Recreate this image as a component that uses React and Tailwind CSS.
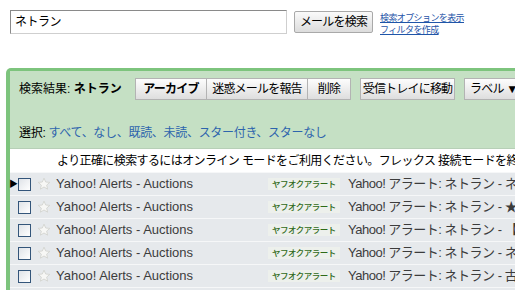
import React from "react";

const jp = "font-['Liberation_Sans','Noto_Sans_CJK_JP',sans-serif]";

const rows = [
  { arrow: true, tail: "ネト" },
  { arrow: false, tail: "★☆" },
  { arrow: false, tail: "【新" },
  { arrow: false, tail: "ネト" },
  { arrow: false, tail: "古本" },
  { arrow: false, tail: "ネト" },
];

const Star = () => (
  <svg width="14" height="14" viewBox="0 0 24 24">
    <path
      d="M12 2l2.9 6.6 7.1.6-5.4 4.7 1.6 7-6.2-3.8-6.2 3.8 1.6-7L2 9.2l7.1-.6z"
      fill="#f7f7f5"
      stroke="#d2d4cf"
      strokeWidth="1.5"
      strokeLinejoin="round"
    />
  </svg>
);

const ToolButton = ({ children, className = "" }) => (
  <div
    className={`h-[22px] flex items-center border border-[#b3b3b3] bg-gradient-to-b from-[#fdfdfd] to-[#dedede] text-[12px] tracking-[-0.8px] text-black ${className}`}
  >
    {children}
  </div>
);

const MailRow = ({ arrow, tail }) => (
  <div className="h-[23px] flex items-center bg-[#e6e9ec] border-t border-[#f6f7f8] whitespace-nowrap">
    <div className="w-[8px] flex justify-end">
      {arrow && <span className="text-[9px] leading-none text-black">▶</span>}
    </div>
    <div className="w-[13px] h-[13px] border border-[#33557a] bg-gradient-to-br from-[#dfe3e8] to-white" />
    <div className="ml-[6px] w-[14px] flex items-center">
      <Star />
    </div>
    <div className="ml-[5px] w-[212px] text-[13px] text-[#3c3c3c]">
      Yahoo! Alerts - Auctions
    </div>
    <div className="w-[80px] flex">
      <span className="px-[4px] bg-[#edf0ec] text-[8.5px] font-medium tracking-[-0.5px] text-[#2f6a18] leading-[12px]">
        ヤフオクアラート
      </span>
    </div>
    <div className="text-[13px] text-[#3c3c3c] tracking-[-0.5px]">
      Yahoo! アラート: ネトラン - {tail}
    </div>
  </div>
);

export default function App() {
  return (
    <div className={`w-[515px] h-[290px] overflow-hidden bg-white ${jp}`}>
      {/* search bar */}
      <div className="h-[68px] flex items-start pl-[10px] pt-[10px]">
        <div className="w-[277px] h-[24px] border border-[#8a8a8a] border-b-[#cfcfcf] border-r-[#cfcfcf] flex items-center pl-[4px] text-[12px] tracking-[-0.5px] text-black">
          ネトラン
        </div>
        <div className="ml-[7px] mt-[1px] w-[79px] h-[22px] border border-[#a9a9a9] rounded-[2px] bg-gradient-to-b from-[#fafafa] to-[#dcdcdc] flex items-center justify-center text-[12px] tracking-[-0.8px] text-black">
          メールを検索
        </div>
        <div className="ml-[7px] mt-[2px] flex flex-col text-[9px] leading-[12px] tracking-[-0.6px] text-[#1f55a8] underline">
          <span>検索オプションを表示</span>
          <span>フィルタを作成</span>
        </div>
      </div>

      {/* results panel */}
      <div className="ml-[6px] w-[620px] border-l-4 border-t-[3px] border-[#7dc47d] rounded-tl-[5px]">
        <div className="bg-[#c5e0c4] pl-[9px] pt-[7px] pb-[8px]">
          <div className="flex items-center whitespace-nowrap">
            <div className="w-[116px] text-[12px] text-black">
              検索結果: <span className="font-bold">ネトラン</span>
            </div>
            <ToolButton className="w-[72px] justify-center font-bold">アーカイブ</ToolButton>
            <ToolButton className="w-[101px] justify-center border-l-0">迷惑メールを報告</ToolButton>
            <ToolButton className="w-[43px] justify-center border-l-0">削除</ToolButton>
            <ToolButton className="ml-[9px] w-[95px] justify-center">受信トレイに移動</ToolButton>
            <ToolButton className="ml-[9px] w-[72px] pl-[5px] text-[11px]">ラベル ▼</ToolButton>
          </div>
          <div className="mt-[26px] h-[14px] leading-[14px] text-[12px] tracking-[-0.3px] text-black whitespace-nowrap">
            選択:{" "}
            <span className="text-[#2d64ad]">
              すべて、なし、既読、未読、スター付き、スターなし
            </span>
          </div>
        </div>
        <div className="h-[24px] bg-white border-t border-[#b7cfb7] flex items-center pl-[47px] text-[12px] tracking-[-0.6px] text-black whitespace-nowrap">
          より正確に検索するにはオンライン モードをご利用ください。フレックス 接続モードを終了
        </div>
        {rows.map((r, i) => (
          <MailRow key={i} arrow={r.arrow} tail={r.tail} />
        ))}
      </div>
    </div>
  );
}
